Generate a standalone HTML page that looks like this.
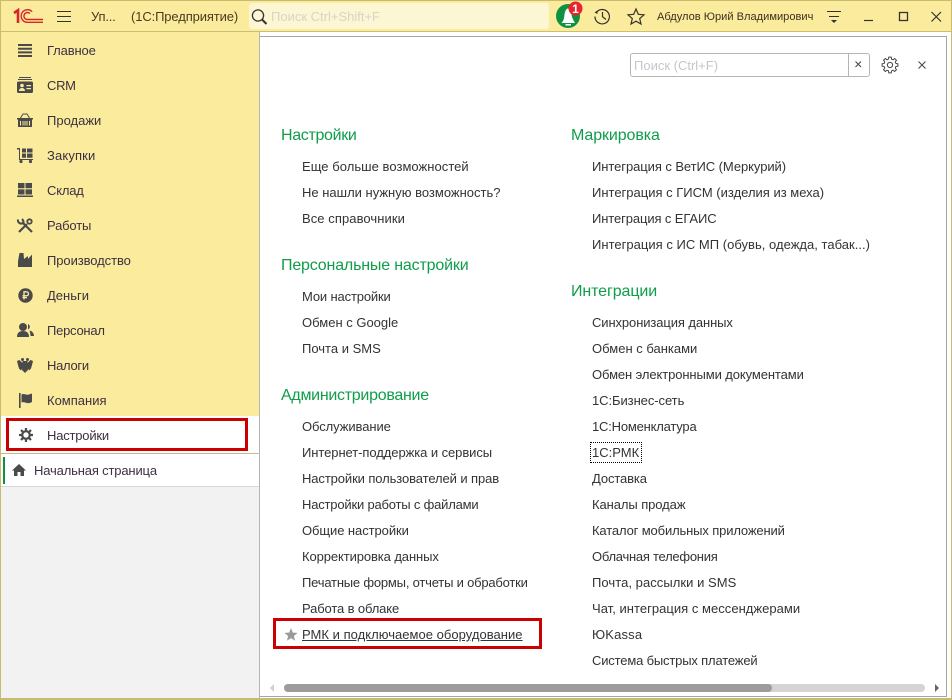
<!DOCTYPE html>
<html lang="ru"><head><meta charset="utf-8"><style>
html,body{margin:0;padding:0}
body{width:952px;height:700px;overflow:hidden;position:relative;background:#fff;font-family:"Liberation Sans",sans-serif;font-size:13px;color:#333}
.a{position:absolute;white-space:nowrap}
.t{position:absolute;white-space:nowrap;line-height:16px}
.h{position:absolute;white-space:nowrap;font-size:16px;line-height:20px;color:#0f9d49}
.m{left:47px;color:#3c3040}
svg{position:absolute;overflow:visible}
</style></head><body>
<div class="a" style="left:0;top:0;width:952px;height:32px;background:#fbec9d"></div>
<div class="a" style="left:0;top:0;width:952px;height:1px;background:#c9bb6d"></div>
<div class="a" style="left:0;top:31px;width:952px;height:1px;background:#cdbf70"></div>
<div class="a" style="left:1px;top:32px;width:259px;height:384px;background:#fbec9d"></div>
<div class="a" style="left:1px;top:416px;width:259px;height:37px;background:#fff"></div>
<div class="a" style="left:1px;top:453px;width:258px;height:1px;background:#c8bd80"></div>
<div class="a" style="left:1px;top:486px;width:258px;height:1px;background:#d8d8d8"></div>
<div class="a" style="left:1px;top:487px;width:258px;height:211px;background:#f2f2f2"></div>
<div class="a" style="left:259px;top:32px;width:1px;height:666px;background:#b4b4b4"></div>
<div class="a" style="left:260px;top:36px;width:686px;height:659px;border:1px solid #a4a4a4;border-left:0;box-sizing:content-box;background:#fff"></div>
<div class="a" style="left:0;top:0;width:1px;height:700px;background:#c9bb6d"></div>
<div class="a" style="left:951px;top:0;width:1px;height:700px;background:#c9bb6d"></div>
<div class="a" style="left:0;top:698px;width:952px;height:2px;background:#c9bb6d"></div>

<!-- logo -->
<svg style="left:14px;top:9px" width="30" height="15" viewBox="0 0 30 15" fill="none" stroke="#d6252b" stroke-width="1.4">
<path d="M0 4L4 1.2V14" stroke-width="2.6"/>
<path d="M29 13.3H13.5a6.3 6.3 0 1 1 4.6-10.6"/><path d="M29 10.5H13.5a3.5 3.5 0 1 1 2.4-6"/>
</svg>
<svg style="left:57px;top:11px" width="14" height="12" stroke="#333" stroke-width="1"><path d="M0 .5H14M0 5.5H14M0 10.5H14"/></svg>
<div class="t" style="left:91px;top:9px;color:#4a3a20;letter-spacing:-.2px">Уп...</div>
<div class="t" style="left:131px;top:9px;color:#4a3a20;letter-spacing:-.12px">(1С:Предприятие)</div>
<!-- search -->
<div class="a" style="left:249px;top:3px;width:300px;height:26px;background:#fdf6d2;border-radius:3px"></div>
<svg style="left:251px;top:8px" width="17" height="18" fill="none" stroke="#333" stroke-width="1.3"><circle cx="7" cy="7.5" r="5.6"/><path d="M11 11.5L15.5 16" stroke-width="2"/></svg>
<div class="t" style="left:271px;top:9px;color:#d8d3cc">Поиск Ctrl+Shift+F</div>
<!-- bell -->
<svg style="left:556px;top:4px" width="26" height="24">
<circle cx="12" cy="12" r="12" fill="#0f9142"/><path d="M5.5 19C8 16.5 8 14 8.5 10.5C9 7 10.3 4.5 12 4.5C13.7 4.5 15 7 15.5 10.5C16 14 17.5 16.5 19 19Z" fill="#fff"/><path d="M9.5 20H15V21.5H9.5Z" fill="#fff"/>
<circle cx="19.5" cy="4.5" r="7" fill="#e9242c"/><text x="19.5" y="8.8" text-anchor="middle" font-family="Liberation Sans" font-weight="700" font-size="12" fill="#fff">1</text></svg>
<!-- history -->
<svg style="left:594px;top:8px" width="17" height="17" fill="none" stroke="#333" stroke-width="1.2"><path d="M2.5 4.3A7.2 7.2 0 1 1 1 8.5"/><path d="M0.5 4.5L3.3 2.5L3.6 6Z" fill="#333" stroke="none"/><path d="M8.5 4V8.7L12 11.5"/></svg>
<!-- star -->
<svg style="left:627px;top:8px" width="18" height="17" fill="none" stroke="#333" stroke-width="1.2"><path d="M9 1L11.3 6.3L17 6.8L12.7 10.6L14 16L9 13.2L4 16L5.3 10.6L1 6.8L6.7 6.3Z"/></svg>
<div class="t" style="left:657px;top:9px;font-size:11.1px;color:#3c3020">Абдулов Юрий Владимирович</div>
<svg style="left:827px;top:10px" width="14" height="13" stroke="#333" stroke-width="1"><path d="M0 1.5H14M2 6.5H12"/><path d="M4 10H10L7 13Z" fill="#333" stroke="none"/></svg>
<svg style="left:864px;top:12px" width="78" height="10" fill="none" stroke="#333" stroke-width="1.2"><path d="M0 8.5H9"/><rect x="35.5" y=".5" width="8" height="8" stroke-width="1.3"/><path d="M67.5 0L77 9.5M77 0L67.5 9.5"/></svg>

<!-- sidebar icons -->
<svg style="left:18px;top:44px" width="14" height="13" fill="#4a4a4a"><path d="M0 0H14V2H0ZM0 3.7H14V5.7H0ZM0 7.4H14V9.4H0ZM0 11H14V13H0Z"/></svg>
<svg style="left:17px;top:77px" width="16" height="16" fill="#4a4a4a"><path d="M2 0H14V1H2ZM1 2H15V3H1ZM1.5 4.5H14.5A1.5 1.5 0 0 1 16 6V14.5A1.5 1.5 0 0 1 14.5 16H1.5A1.5 1.5 0 0 1 0 14.5V6A1.5 1.5 0 0 1 1.5 4.5Z"/><circle cx="5" cy="8.5" r="1.8" fill="#fbec9d"/><path d="M2 14C2 12 3.5 11 5 11S8 12 8 14ZM9.5 8H14V9.3H9.5ZM9.5 11H14V12.3H9.5Z" fill="#fbec9d"/></svg>
<svg style="left:17px;top:113px" width="16" height="14" fill="#4a4a4a"><path d="M0 5H16V6.5H15V14H1V6.5H0Z"/><path d="M3.5 5L6 1H10L12.5 5" fill="none" stroke="#4a4a4a"/><path d="M3.5 8V12.5M6 8V12.5M8 8V12.5M10 8V12.5M12.5 8V12.5" stroke="#fbec9d" stroke-width="1"/></svg>
<svg style="left:17px;top:148px" width="16" height="15" fill="#4a4a4a"><path d="M0 0H3V11H16V12H2V1.5H0Z"/><path d="M5 .5H9V4.5H5ZM10 .5H15.5V4.5H10ZM5 5.5H9V9.7H5ZM10 5.5H15.5V9.7H10Z"/><circle cx="4" cy="13.5" r="1.6"/><circle cx="13.5" cy="13.5" r="1.6"/></svg>
<svg style="left:17px;top:183px" width="16" height="14" fill="#4a4a4a"><path d="M1 0H7.5V5.3H1ZM8.5 0H15V5.3H8.5ZM1 6.4H7.5V11.5H1ZM8.5 6.4H15V11.5H8.5ZM0 12.5H16V14H0Z"/></svg>
<svg style="left:17px;top:218px" width="16" height="15" fill="none" stroke="#4a4a4a" stroke-width="2.2"><path d="M15 14L5 4"/><path d="M1 1.5C0.5 4 2.5 6 5 5.5S6.5 2.5 5 1" stroke-width="2"/><path d="M2 14L10 6"/><circle cx="12.5" cy="3.5" r="2.2" stroke-width="1.8"/></svg>
<svg style="left:18px;top:253px" width="14" height="14" fill="#4a4a4a"><path d="M0 14V8L1.5 0H5.5L6 6L10 3V6L14 1.5V14Z"/></svg>
<svg style="left:18px;top:288px" width="15" height="15"><circle cx="7.5" cy="7.5" r="7.2" fill="#4a4a4a"/><path d="M6 11.5V3.8H8.5A2 2 0 0 1 8.5 7.8H4.5M4.5 9.6H9" fill="none" stroke="#fbec9d" stroke-width="1.3"/></svg>
<svg style="left:17px;top:323px" width="17" height="14" fill="#4a4a4a"><circle cx="6" cy="4" r="4"/><path d="M0 14C0 10 2 8 6 8S12 10 12 14Z"/><path d="M11 1A3 3 0 0 1 11 6.5ZM12.5 7.5C15 8 17 10 17 13H13.5C13.5 11 13 9.5 12.5 7.5Z"/></svg>
<svg style="left:17px;top:358px" width="16" height="15" fill="#4a4a4a"><path d="M5.5 3H10.5L11 12L8 15L5 12Z"/><path d="M0 3L2.5 2L5.5 5V10L4 12.5L2 10.5L1 7ZM16 3L13.5 2L10.5 5V10L12 12.5L14 10.5L15 7Z"/><circle cx="5.5" cy="1.5" r="1.5"/><circle cx="10.5" cy="1.5" r="1.5"/></svg>
<svg style="left:19px;top:393px" width="13" height="15" fill="#4a4a4a"><path d="M0 0H1.6V15H0ZM2.5 1.5C5 0 7 2.5 10 1.5C11 1.2 12 .8 13 .5V9C11 9.8 10 10.5 8 10C6 9.5 4.5 8.5 2.5 9.5Z"/></svg>
<svg style="left:19px;top:428px" width="14" height="14" viewBox="0 0 14 14"><circle cx="7" cy="7" r="3.8" fill="none" stroke="#4a4a4a" stroke-width="2.2"/><path d="M7 0V14M0 7H14M2 2L12 12M12 2L2 12" stroke="#4a4a4a" stroke-width="2.2" stroke-dasharray="2.4 9.2 2.4 0"/></svg>
<svg style="left:12px;top:464px" width="14" height="12" fill="#4a4a4a"><path d="M7 0L14 6.5H12V12H8.5V8H5.5V12H2V6.5H0Z"/></svg>

<div class="t m" style="top:43px;letter-spacing:-.14px">Главное</div>
<div class="t m" style="top:78px;letter-spacing:-.3px">CRM</div>
<div class="t m" style="top:113px">Продажи</div>
<div class="t m" style="top:148px;letter-spacing:.14px">Закупки</div>
<div class="t m" style="top:183px;letter-spacing:-.2px">Склад</div>
<div class="t m" style="top:218px;letter-spacing:-.16px">Работы</div>
<div class="t m" style="top:253px;letter-spacing:-.08px">Производство</div>
<div class="t m" style="top:288px">Деньги</div>
<div class="t m" style="top:323px;letter-spacing:-.25px">Персонал</div>
<div class="t m" style="top:358px;letter-spacing:-.3px">Налоги</div>
<div class="t m" style="top:393px">Компания</div>
<div class="t m" style="top:428px;letter-spacing:-.2px">Настройки</div>
<div class="a" style="left:6px;top:418px;width:242px;height:33px;border:3px solid #cc0000;box-sizing:border-box"></div>
<div class="a" style="left:3px;top:457px;width:2px;height:27px;background:#0f9142"></div>
<div class="t m" style="left:34px;top:463px;letter-spacing:-.16px">Начальная страница</div>

<!-- content search -->
<div class="a" style="left:630px;top:53px;height:24px;border:1px solid #b4b4b4;border-radius:3px;box-sizing:border-box;width:240px"></div>
<div class="a" style="left:848px;top:54px;width:1px;height:22px;background:#b4b4b4"></div>
<div class="t" style="left:634px;top:58px;color:#c8c4cc">Поиск (Ctrl+F)</div>
<svg style="left:855px;top:61px" width="7" height="7" stroke="#444" stroke-width="1"><path d="M0.5 0.5L6 6M6 0.5L0.5 6"/></svg>
<svg style="left:882px;top:57px" width="16" height="16" viewBox="-8 -8 16 16" fill="none" stroke="#444" stroke-width="1"><circle r="2.6"/>
<g id="g"><path d="M-1.55-5.8L-1.25-7.9H1.25L1.55-5.8A6 6 0 0 1 3-5.2"/></g>
<path transform="rotate(45)" d="M-1.55-5.8L-1.25-7.9H1.25L1.55-5.8A6 6 0 0 1 3-5.2"/>
<path transform="rotate(90)" d="M-1.55-5.8L-1.25-7.9H1.25L1.55-5.8A6 6 0 0 1 3-5.2"/>
<path transform="rotate(135)" d="M-1.55-5.8L-1.25-7.9H1.25L1.55-5.8A6 6 0 0 1 3-5.2"/>
<path transform="rotate(180)" d="M-1.55-5.8L-1.25-7.9H1.25L1.55-5.8A6 6 0 0 1 3-5.2"/>
<path transform="rotate(225)" d="M-1.55-5.8L-1.25-7.9H1.25L1.55-5.8A6 6 0 0 1 3-5.2"/>
<path transform="rotate(270)" d="M-1.55-5.8L-1.25-7.9H1.25L1.55-5.8A6 6 0 0 1 3-5.2"/>
<path transform="rotate(315)" d="M-1.55-5.8L-1.25-7.9H1.25L1.55-5.8A6 6 0 0 1 3-5.2"/>
</svg>
<svg style="left:918px;top:61px" width="8" height="8" stroke="#444" stroke-width="1"><path d="M0.5 0.5L7.5 7.5M7.5 0.5L0.5 7.5"/></svg>

<div class="h" style="left:281px;top:126px;letter-spacing:-.33px">Настройки</div>
<div class="t" style="left:302px;top:159px;letter-spacing:.04px">Еще больше возможностей</div>
<div class="t" style="left:302px;top:185px">Не нашли нужную возможность?</div>
<div class="t" style="left:302px;top:211px;letter-spacing:.07px">Все справочники</div>
<div class="h" style="left:281px;top:256px;letter-spacing:-.17px">Персональные настройки</div>
<div class="t" style="left:302px;top:289px;letter-spacing:-.15px">Мои настройки</div>
<div class="t" style="left:302px;top:315px">Обмен с Google</div>
<div class="t" style="left:302px;top:341px">Почта и SMS</div>
<div class="h" style="left:281px;top:386px;letter-spacing:-.28px">Администрирование</div>
<div class="t" style="left:302px;top:419px;letter-spacing:-.08px">Обслуживание</div>
<div class="t" style="left:302px;top:445px;letter-spacing:-.07px">Интернет-поддержка и сервисы</div>
<div class="t" style="left:302px;top:471px;letter-spacing:-.1px">Настройки пользователей и прав</div>
<div class="t" style="left:302px;top:497px;letter-spacing:-.19px">Настройки работы с файлами</div>
<div class="t" style="left:302px;top:523px;letter-spacing:-.07px">Общие настройки</div>
<div class="t" style="left:302px;top:549px;letter-spacing:-.1px">Корректировка данных</div>
<div class="t" style="left:302px;top:575px;letter-spacing:-.2px">Печатные формы, отчеты и обработки</div>
<div class="t" style="left:302px;top:601px;letter-spacing:-.13px">Работа в облаке</div>
<div class="t" style="left:302px;top:627px;text-decoration:underline;letter-spacing:.03px">РМК и подключаемое оборудование</div>
<svg style="left:284px;top:628px" width="14" height="13" fill="#9a9a9a"><path d="M7 0L8.8 4.6L13.6 4.9L9.9 8L11.1 12.8L7 10.1L2.9 12.8L4.1 8L.4 4.9L5.2 4.6Z"/></svg>
<div class="a" style="left:273px;top:618px;width:269px;height:31px;border:3px solid #cc0000;box-sizing:border-box"></div>

<div class="h" style="left:571px;top:126px;letter-spacing:-.1px">Маркировка</div>
<div class="t" style="left:592px;top:159px;letter-spacing:-.07px">Интеграция с ВетИС (Меркурий)</div>
<div class="t" style="left:592px;top:185px">Интеграция с ГИСМ (изделия из меха)</div>
<div class="t" style="left:592px;top:211px;letter-spacing:-.11px">Интеграция с ЕГАИС</div>
<div class="t" style="left:592px;top:237px;letter-spacing:.02px">Интеграция с ИС МП (обувь, одежда, табак...)</div>
<div class="h" style="left:571px;top:282px;letter-spacing:-.1px">Интеграции</div>
<div class="t" style="left:592px;top:315px;letter-spacing:-.1px">Синхронизация данных</div>
<div class="t" style="left:592px;top:341px">Обмен с банками</div>
<div class="t" style="left:592px;top:367px;letter-spacing:-.1px">Обмен электронными документами</div>
<div class="t" style="left:592px;top:393px;letter-spacing:-.07px">1С:Бизнес-сеть</div>
<div class="t" style="left:592px;top:419px;letter-spacing:-.2px">1С:Номенклатура</div>
<div class="t" style="left:592px;top:445px">1С:РМК</div>
<div class="a" style="left:590px;top:442px;width:52px;height:21px;border:1px dotted #000;box-sizing:border-box"></div>
<div class="t" style="left:592px;top:471px;letter-spacing:-.12px">Доставка</div>
<div class="t" style="left:592px;top:497px;letter-spacing:-.08px">Каналы продаж</div>
<div class="t" style="left:592px;top:523px;letter-spacing:-.14px">Каталог мобильных приложений</div>
<div class="t" style="left:592px;top:549px;letter-spacing:-.26px">Облачная телефония</div>
<div class="t" style="left:592px;top:575px;letter-spacing:.05px">Почта, рассылки и SMS</div>
<div class="t" style="left:592px;top:601px;letter-spacing:.03px">Чат, интеграция с мессенджерами</div>
<div class="t" style="left:592px;top:627px;letter-spacing:.16px">ЮKassa</div>
<div class="t" style="left:592px;top:653px;letter-spacing:-.17px">Система быстрых платежей</div>

<!-- scrollbar -->
<div class="a" style="left:284px;top:684px;width:641px;height:8px;background:#d4d4d4;border-radius:4px"></div>
<div class="a" style="left:284px;top:684px;width:488px;height:8px;background:#9c9c9c;border-radius:4px"></div>
<svg style="left:270px;top:684px" width="5" height="8" fill="#d0d0d0"><path d="M4 0V8L0 4Z"/></svg>
<svg style="left:935px;top:684px" width="5" height="8" fill="#666"><path d="M0 0V8L4 4Z"/></svg>
</body></html>
